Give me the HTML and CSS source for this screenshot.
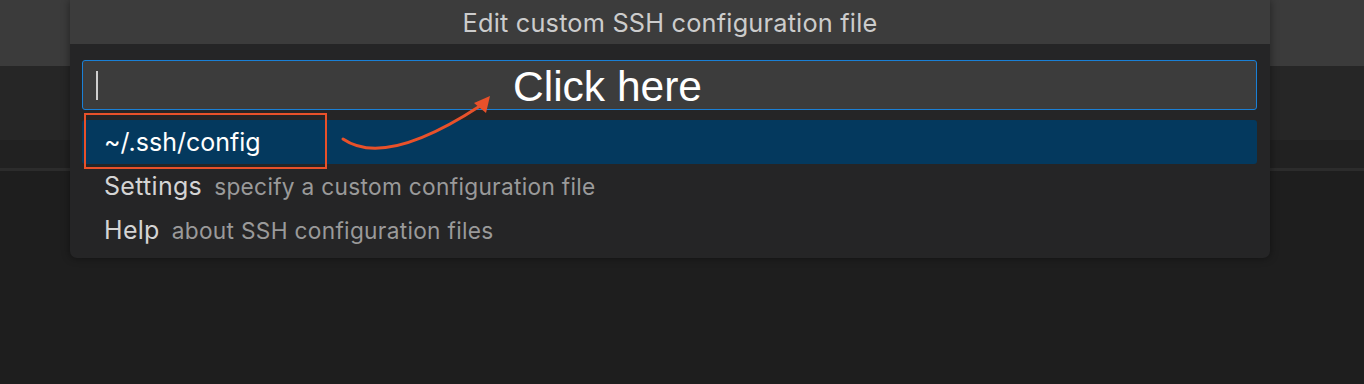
FILE: index.html
```html
<!DOCTYPE html>
<html lang="en">
<head>
    <meta charset="UTF-8">
    <meta name="viewport" content="width=device-width, initial-scale=1.0">
    <title>Edit custom SSH configuration file</title>
    <link rel="stylesheet" href="styles.css">
</head>
<body>
    <div class="workbench">
        <div class="titlebar"></div>
        <div class="tabs"></div>
        <div class="breadcrumbs"></div>
        <div class="editor"></div>
    </div>

    <div class="quick-input">
        <div class="qi-title">Edit custom SSH configuration file</div>
        <div class="qi-body">
            <div class="qi-box"><span class="caret"></span></div>
            <ul class="qi-list">
                <li class="qi-item active"><span class="label">~/.ssh/config</span></li>
                <li class="qi-item"><span class="label">Settings</span><span class="desc">specify a custom configuration file</span></li>
                <li class="qi-item"><span class="label">Help</span><span class="desc">about SSH configuration files</span></li>
            </ul>
        </div>
    </div>

    <!-- пометки поверх скриншота -->
    <div class="mark-box"></div>
    <svg class="mark-arrow" width="170" height="70" viewBox="330 90 170 70">
        <path d="M343 139 Q 385 168 480 106" fill="none" stroke="#e8512a" stroke-width="3" stroke-linecap="round"/>
        <polygon points="490,96 474,103 486,113" fill="#e8512a"/>
    </svg>
    <div class="mark-text">Click here</div>
</body>
</html>
```

FILE: styles.css
```css
body {
    margin: 0;
    width: 1364px;
    height: 384px;
    overflow: hidden;
    position: relative;
    background: #1e1e1e;
    font-family: 'Inter', 'Liberation Sans', sans-serif;
}
.workbench {
    display: flex;
    flex-direction: column;
    height: 100%;
}
.titlebar {
    height: 66px;
    background: #3b3b3b;
}
.tabs {
    height: 74px;
    background: #262626;
}
.breadcrumbs {
    height: 28px;
    background: #212121;
    border-bottom: 3px solid #2c2c2c;
}
.editor {
    flex: 1;
    background: #1e1e1e;
}

/* окно быстрого выбора */
.quick-input {
    position: absolute;
    left: 70px;
    top: 0;
    width: 1200px;
    background: #252526;
    border-radius: 0 0 7px 7px;
    box-shadow: 0 0 9px rgba(0, 0, 0, 0.45);
}
.qi-title {
    height: 44px;
    background: #3c3c3c;
    color: #cccccc;
    font-size: 25.3px;
    display: flex;
    align-items: center;
    justify-content: center;
    letter-spacing: 0.2px;
}
.qi-body {
    padding: 16px 13px 6px 12px;
}
.qi-box {
    height: 48px;
    background: #3c3c3c;
    border: 1px solid #1a80d6;
    border-radius: 3px;
    display: flex;
    align-items: center;
    padding-left: 13px;
}
.caret {
    width: 2px;
    height: 29px;
    background: #cfcfcf;
}
.qi-list {
    list-style: none;
    margin: 10px 0 0;
    padding: 0;
}
.qi-item {
    height: 44px;
    display: flex;
    align-items: center;
    padding-left: 22px;
    gap: 12px;
    border-radius: 3px;
}
.qi-item.active {
    background: #04395e;
}
.label {
    color: #d4d4d4;
    font-size: 25px;
    letter-spacing: 0.3px;
}
.active .label {
    color: #ffffff;
    letter-spacing: 0;
}
.desc {
    color: #9a9a9a;
    font-size: 22.7px;
    letter-spacing: 0.3px;
}

/* пометки */
.mark-box {
    position: absolute;
    left: 84px;
    top: 113px;
    width: 239px;
    height: 52px;
    border: 2.5px solid #e8512a;
}
.mark-arrow {
    position: absolute;
    left: 330px;
    top: 90px;
}
.mark-text {
    position: absolute;
    left: 513px;
    top: 63px;
    color: #ffffff;
    font-family: 'Liberation Sans', Arial, sans-serif;
    font-size: 42.5px;
    line-height: 48px;
}
```
